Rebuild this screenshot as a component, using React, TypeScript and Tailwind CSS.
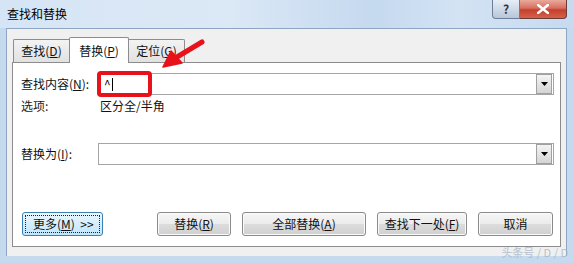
import React from "react";

const font = { fontFamily: '"Microsoft YaHei", "Noto Sans CJK SC", "Noto Sans", sans-serif' };

function DropBtn() {
  return (
    <div className="w-[16px] h-[20px] mr-px border border-[#a0a0a0] bg-gradient-to-b from-[#f4f4f4] to-[#d4d4d4] flex items-center justify-center">
      <svg width="7" height="4" viewBox="0 0 7 4">
        <path d="M0 0 L7 0 L3.5 4 Z" fill="#000" />
      </svg>
    </div>
  );
}

function Btn({ children, w, focus }: { children: React.ReactNode; w: string; focus?: boolean }) {
  if (focus) {
    return (
      <div className={`${w} h-[24px] rounded-[3px] border border-[#3c7fb1] bg-gradient-to-b from-[#eaf6fd] to-[#bee6fd] p-[2px]`}>
        <div className="w-full h-full border border-dotted border-[#222] flex items-center pl-[7px] text-[12px] text-[#111]">
          {children}
        </div>
      </div>
    );
  }
  return (
    <div className={`${w} h-[24px] rounded-[3px] border border-[#8a8a8a] bg-[linear-gradient(#f6f6f6_0%,#ececec_48%,#dcdcdc_52%,#d0d0d0_100%)] shadow-[inset_0_0_0_1px_#fbfbfb] flex items-center justify-center text-[12px] text-[#111]`}>
      {children}
    </div>
  );
}

export default function App() {
  return (
    <div className="w-[574px] h-[263px] overflow-hidden flex flex-col bg-[#c2d7ee] relative" style={font}>
      {/* title bar */}
      <div className="h-[28px] flex items-start bg-[linear-gradient(90deg,#d6e5f5_0%,#dbe8f6_40%,#c5d9ef_65%,#d3e3f4_80%,#c6daf0_100%)] relative">
        <div className="pl-[7px] pt-[6px] text-[12px] text-black leading-[16px]">查找和替换</div>
        <div className="ml-auto mr-[7px] flex h-[19px]">
          <div className="w-[28px] h-[19px] border border-[#6c7f96] border-t-0 rounded-bl-[4px] bg-gradient-to-b from-[#e6edf6] to-[#b7c7da] flex items-center justify-center text-[12px] text-[#334] font-bold leading-none">
            ?
          </div>
          <div className="w-[47px] h-[19px] border border-[#6b3b36] border-l-0 border-t-0 rounded-br-[4px] bg-[linear-gradient(#e9a99c_0%,#d6705f_45%,#c4402e_55%,#d5624c_100%)] flex items-center justify-center">
            <svg width="12" height="10" viewBox="0 0 12 10">
              <path d="M1 1 L11 9 M11 1 L1 9" stroke="#fff" strokeWidth="2.6" strokeLinecap="square" />
            </svg>
          </div>
        </div>
      </div>
      <div className="flex flex-1">
        <div className="w-[6px] bg-[#c5d9ef]" />
        <div className="flex-1 bg-[#f0f0f0] border border-[#8ea6c2] border-b-0 pt-[8px] px-[5px] pb-[9px] flex flex-col">
          {/* tabs */}
          <div className="flex items-end h-[25px] pl-[1px]">
            <div className="h-[23px] w-[56px] border border-[#8c8c8c] border-b-0 border-r-0 rounded-tl-[2px] bg-gradient-to-b from-[#f3f3f3] to-[#e1e1e1] flex items-center justify-center text-[12px] text-[#111]">
              查找(<u>D</u>)
            </div>
            <div className="h-[26px] w-[60px] -mb-px z-10 border border-[#8c8c8c] border-b-0 rounded-t-[2px] bg-white flex items-center justify-center text-[12px] text-[#111]">
              替换(<u>P</u>)
            </div>
            <div className="h-[23px] w-[56px] border border-[#8c8c8c] border-b-0 border-l-0 rounded-tr-[2px] bg-gradient-to-b from-[#f3f3f3] to-[#e1e1e1] flex items-center justify-center text-[12px] text-[#111]">
              定位(<u>G</u>)
            </div>
          </div>
          {/* panel */}
          <div className="flex-1 bg-white border border-[#8c8c8c] relative flex flex-col pl-[8px] pr-[6px] pt-[10px] pb-[10px]">
            <div className="flex items-center h-[22px]">
              <div className="w-[77px] text-[12px] text-[#111]">
                查找内容(<u>N</u>):
              </div>
              <div className="flex-1 h-[22px] border border-[#a5a5a5] flex items-center">
                <div className="pl-[5px] flex items-center text-[12px] text-black">
                  <span>^</span>
                  <span className="inline-block w-px h-[13px] bg-black ml-[1px]" />
                </div>
                <div className="ml-auto">
                  <DropBtn />
                </div>
              </div>
            </div>
            <div className="flex items-center h-[22px] mt-[0px]">
              <div className="w-[79px] text-[12px] text-[#222]">选项:</div>
              <div className="text-[12px] text-[#111]">区分全/半角</div>
            </div>
            <div className="flex items-center h-[22px] mt-[26px]">
              <div className="w-[77px] text-[12px] text-[#111]">
                替换为(<u>I</u>):
              </div>
              <div className="flex-1 h-[22px] border border-[#a5a5a5] flex items-center justify-end">
                <DropBtn />
              </div>
            </div>
            <div className="mt-auto flex items-center pl-[1px] pr-[1px]">
              <Btn w="w-[81px]" focus>
                更多(<u>M</u>)&nbsp;&nbsp;&gt;&gt;
              </Btn>
              <div className="ml-auto flex gap-[11px]">
                <Btn w="w-[74px]">
                  替换(<u>R</u>)
                </Btn>
                <Btn w="w-[124px]">
                  全部替换(<u>A</u>)
                </Btn>
                <Btn w="w-[90px]">
                  查找下一处(<u>F</u>)
                </Btn>
                <Btn w="w-[75px]">取消</Btn>
              </div>
            </div>
            {/* red highlight */}
            <div className="absolute left-[84px] top-[8px] w-[55px] h-[26px] border-[4px] border-[#e8121b] rounded-[4px]" />
          </div>
        </div>
        <div className="w-[7px] bg-[#c5d9ef]" />
      </div>
      <div className="h-[7px] bg-[#c5d9ef]" />
      {/* arrow */}
      <svg className="absolute left-[150px] top-[36px]" width="60" height="36" viewBox="0 0 60 36">
        <path d="M52 6 L27 21" stroke="#e8121b" strokeWidth="5" strokeLinecap="round" />
        <path d="M13 31 L21 15 L32 27 Z" fill="#e8121b" strokeLinejoin="round" stroke="#e8121b" strokeWidth="1.5" />
      </svg>
      <div className="absolute right-[6px] bottom-[3px] text-[11px] text-[#a8b6c6] opacity-80">头条号 / D / D</div>
    </div>
  );
}
